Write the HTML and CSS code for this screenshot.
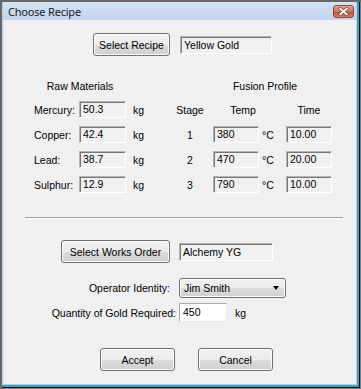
FILE: index.html
```html
<!DOCTYPE html>
<html lang="en">
<head>
    <meta charset="UTF-8">
    <title>Choose Recipe</title>
    <link rel="stylesheet" href="styles.css">
</head>
<body>

<div class="window">
    <div class="titlebar">
        <span class="title">Choose Recipe</span>
        <span class="close-btn">
            <svg width="11" height="9" viewBox="0 0 11 9">
                <path d="M2 1.5 L9 7.5 M9 1.5 L2 7.5" stroke="#6b3a33" stroke-width="3.2" stroke-linecap="round"/>
                <path d="M2 1.5 L9 7.5 M9 1.5 L2 7.5" stroke="#ffffff" stroke-width="1.8" stroke-linecap="round"/>
            </svg>
        </span>
    </div>

    <div class="client">
        <div class="recipe-row">
            <button class="btn btn-recipe">Select Recipe</button>
            <div class="field field-recipe">Yellow Gold</div>
        </div>

        <div class="materials">
            <div class="heading raw-heading">Raw Materials</div>
            <div class="heading fusion-heading">Fusion Profile</div>

            <div class="cell">Mercury:</div>
            <div class="field">50.3</div>
            <div class="cell unit">kg</div>
            <div class="cell center">Stage</div>
            <div class="cell col-temp">Temp</div>
            <div class="cell center">Time</div>

            <div class="cell">Copper:</div>
            <div class="field">42.4</div>
            <div class="cell unit">kg</div>
            <div class="cell center">1</div>
            <div class="field col-box">380</div>
            <div class="cell deg">°C</div>
            <div class="field">10.00</div>

            <div class="cell">Lead:</div>
            <div class="field">38.7</div>
            <div class="cell unit">kg</div>
            <div class="cell center">2</div>
            <div class="field col-box">470</div>
            <div class="cell deg">°C</div>
            <div class="field">20.00</div>

            <div class="cell">Sulphur:</div>
            <div class="field">12.9</div>
            <div class="cell unit">kg</div>
            <div class="cell center">3</div>
            <div class="field col-box">790</div>
            <div class="cell deg">°C</div>
            <div class="field">10.00</div>
        </div>

        <div class="separator"></div>

        <div class="works-row">
            <button class="btn btn-works">Select Works Order</button>
            <div class="field field-works">Alchemy YG</div>
        </div>

        <div class="order-form">
            <label class="op-label">Operator Identity:</label>
            <div class="combo">
                <span>Jim Smith</span>
                <span class="arrow"></span>
            </div>

            <label class="qty-label">Quantity of Gold Required:</label>
            <div class="qty-row">
                <div class="input-box">450</div>
                <span>kg</span>
            </div>
        </div>

        <div class="actions">
            <button class="btn btn-action">Accept</button>
            <button class="btn btn-action">Cancel</button>
        </div>
    </div>
</div>

</body>
</html>
```

FILE: styles.css
```css
html, body {
    margin: 0;
    background: #7d7d7d;
}
.window {
    width: 361px;
    height: 389px;
    box-sizing: border-box;
    padding: 2px 5px 5px 3px;
    background: #b9cfea;
    box-shadow: inset 2px 2px 0 #676767, inset -1px -1px 0 #7d7d7d, inset -2px -2px 0 #111, inset -4px -4px 0 #34a2c6;
    display: flex;
    flex-direction: column;
    font-family: "Liberation Sans", Arial, sans-serif;
    font-size: 10.5px;
    color: #000;
}
.titlebar {
    height: 18px;
    display: flex;
    align-items: flex-start;
    justify-content: space-between;
    background: linear-gradient(#d5e3f4, #c0d4ec);
}
.title {
    font-family: "Noto Sans", sans-serif;
    font-size: 11px;
    color: #1b1b1b;
    margin: 2px 0 0 5px;
    letter-spacing: -0.2px;
}
.close-btn {
    width: 21px;
    height: 13px;
    margin: 3px 2px 0 0;
    box-sizing: border-box;
    border: 1px solid #8d4538;
    border-radius: 3px;
    background: linear-gradient(#e6a79a, #d0705e 50%, #c24a36 51%, #d77a62);
    display: flex;
    align-items: center;
    justify-content: center;
}
.client {
    flex: 1;
    background: #f0f0f0;
    border-left: 1px solid #dfe9f5;
}
.btn {
    height: 23px;
    box-sizing: border-box;
    padding: 0 2px;
    border: 1px solid #707070;
    border-radius: 3px;
    background: linear-gradient(#f2f2f2 0%, #ebebeb 50%, #dddddd 51%, #cfcfcf 100%);
    box-shadow: inset 0 0 0 1px #fbfbfb;
    font-family: "Liberation Sans", Arial, sans-serif;
    font-size: 10.5px;
    color: #000;
    white-space: nowrap;
}
.field {
    height: 17px;
    box-sizing: border-box;
    border: 1px solid;
    border-color: #b4b4b4 #ffffff #ffffff #b4b4b4;
    box-shadow: inset 1px 1px 0 #777;
    background: #f0f0f0;
    padding-left: 3px;
    line-height: 15px;
    white-space: nowrap;
}
.recipe-row {
    display: flex;
    align-items: center;
    gap: 10px;
    margin: 13px 0 0 89px;
}
.btn-recipe {
    width: 77px;
}
.field-recipe {
    width: 92px;
    height: 18px;
    line-height: 16px;
}
.materials {
    display: grid;
    grid-template-columns: 45px 47px 49px 30px 8px 46px 27px 46px;
    grid-template-rows: 22px repeat(4, 25px);
    align-items: center;
    margin: 19px 0 0 30px;
}
.heading {
    text-align: center;
}
.raw-heading {
    grid-column: 1 / 3;
}
.fusion-heading {
    grid-column: 6 / 9;
    padding-right: 15px;
}
.cell {
    white-space: nowrap;
}
.center {
    text-align: center;
}
.unit {
    padding-left: 7px;
}
.col-temp {
    grid-column: 6 / 8;
    text-align: center;
    padding-right: 13px;
}
.col-box {
    grid-column: 6;
}
.deg {
    padding-left: 3px;
}
.separator {
    margin: 20px 13px 0 21px;
    border-top: 1px solid #a0a0a0;
    border-bottom: 1px solid #ffffff;
}
.works-row {
    display: flex;
    align-items: center;
    gap: 9px;
    margin: 21px 0 0 57px;
}
.btn-works {
    width: 109px;
}
.field-works {
    width: 94px;
    height: 18px;
    line-height: 16px;
}
.order-form {
    display: grid;
    grid-template-columns: 175px auto;
    row-gap: 5px;
    align-items: center;
    justify-items: end;
    margin-top: 15px;
}
.order-form > div {
    justify-self: start;
}
.op-label {
    padding-right: 9px;
}
.qty-label {
    padding-right: 3px;
}
.combo {
    width: 107px;
    height: 20px;
    box-sizing: border-box;
    border: 1px solid #707070;
    border-radius: 3px;
    background: linear-gradient(#f2f2f2 0%, #ebebeb 50%, #dddddd 51%, #cfcfcf 100%);
    box-shadow: inset 0 0 0 1px #fbfbfb;
    display: flex;
    align-items: center;
    justify-content: space-between;
    padding: 0 6px 0 4px;
}
.arrow {
    width: 0;
    height: 0;
    border-left: 3px solid transparent;
    border-right: 3px solid transparent;
    border-top: 4px solid #000;
}
.qty-row {
    display: flex;
    align-items: center;
    gap: 8px;
}
.input-box {
    width: 48px;
    height: 19px;
    box-sizing: border-box;
    border: 1px solid;
    border-color: #abadb3 #e3e9ef #e3e9ef #abadb3;
    background: #fff;
    padding-left: 3px;
    line-height: 17px;
}
.actions {
    display: flex;
    gap: 23px;
    margin: 26px 0 0 96px;
}
.btn-action {
    width: 75px;
}
```
